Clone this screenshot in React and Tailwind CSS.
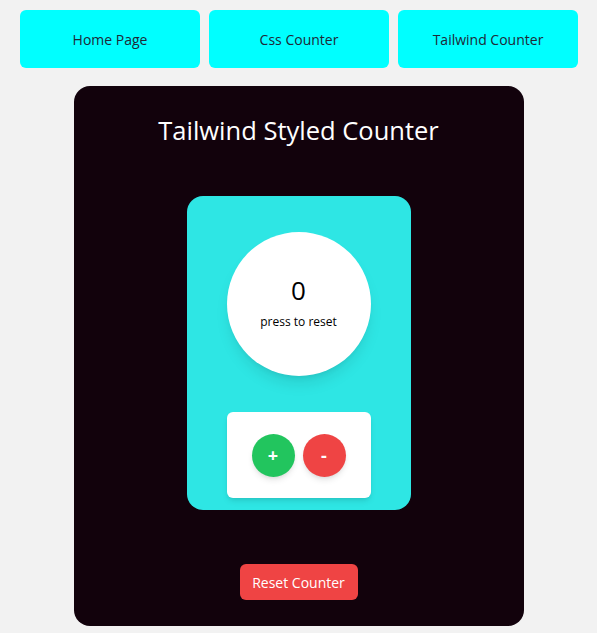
export default function App() {
  return (
    <div className="min-h-[633px] w-full bg-[#f2f2f2] font-['Open_Sans',sans-serif]">
      <nav className="flex gap-[9px] pl-5 pt-[10px]">
        {["Home Page", "Css Counter", "Tailwind Counter"].map((t) => (
          <button
            key={t}
            className="flex h-[58px] w-[180px] shrink-0 items-center justify-center rounded-md bg-[#00ffff] text-[14px] text-[#1f2937]"
          >
            {t}
          </button>
        ))}
      </nav>
      <div className="mx-auto mt-[18px] flex h-[540px] w-[450px] flex-col items-center rounded-2xl bg-[#12020c]">
        <h1 className="mt-[24px] text-[25.5px] leading-[40px] text-white">Tailwind Styled Counter</h1>
        <div className="mt-[46px] flex h-[314px] w-[224px] flex-col items-center rounded-2xl bg-[#2ee6e4]">
          <button className="mt-[36px] flex h-[144px] w-[144px] flex-col items-center justify-center rounded-full bg-white shadow-lg">
            <span className="text-[26px] leading-[24px] text-black">0</span>
            <span className="mt-[12px] text-[12px] leading-[16px] text-black">press to reset</span>
          </button>
          <div className="mt-[36px] flex h-[86px] w-[144px] items-center justify-center gap-2 rounded-md bg-white shadow-md">
            <button className="flex h-[43px] w-[43px] items-center justify-center rounded-full bg-[#22c55e] text-[18px] font-bold text-white shadow-md">
              +
            </button>
            <button className="flex h-[43px] w-[43px] items-center justify-center rounded-full bg-[#ef4444] text-[18px] font-bold text-white shadow-md">
              -
            </button>
          </div>
        </div>
        <button className="mt-[54px] h-[36px] w-[118px] rounded-md bg-[#ef4444] text-[14px] text-white">
          Reset Counter
        </button>
      </div>
    </div>
  );
}
